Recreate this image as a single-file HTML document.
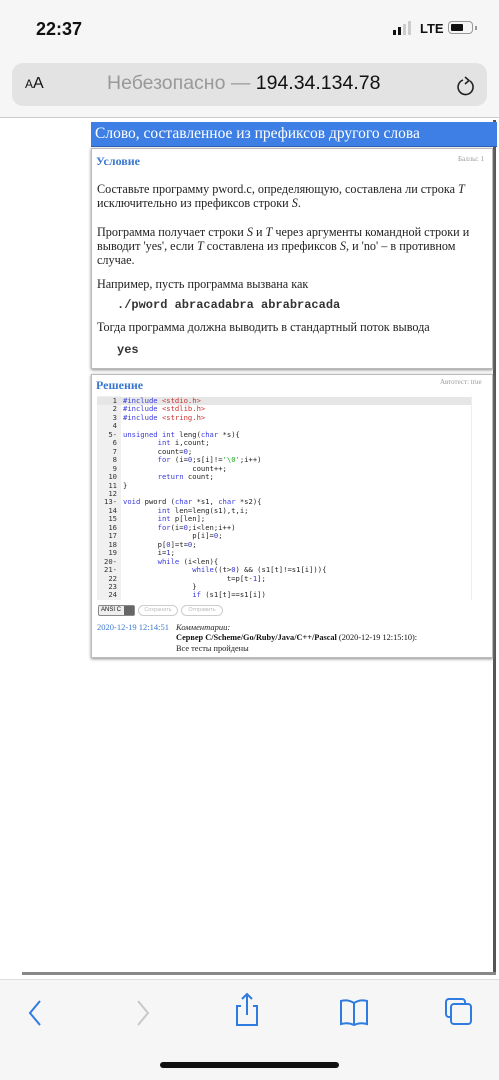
<!DOCTYPE html>
<html><head><meta charset="utf-8"><style>
*{margin:0;padding:0;box-sizing:border-box}
body{width:499px;height:1080px;background:#fff;position:relative;overflow:hidden;font-family:"Liberation Serif",serif;color:#222}
.a{position:absolute}
.sans{font-family:"Liberation Sans",sans-serif}
.code{font-family:"DejaVu Sans Mono","Liberation Mono",monospace;font-size:7.2px;line-height:8.45px;white-space:pre;color:#222}
.k{color:#3a3adf}.s{color:#c33}.n{color:#33c}.g{color:#2a2}
p.t{position:absolute;left:97px;font-size:12.2px;line-height:14px;width:392px}
</style></head><body>
<div class="a" style="left:0;top:0;width:499px;height:118px;background:#f6f6f6"></div>
<div class="a sans" style="left:36px;top:19px;font-size:18px;font-weight:bold;color:#111">22:37</div>
<div class="a" style="left:393px;top:30px;width:3px;height:5px;background:#111"></div>
<div class="a" style="left:398px;top:27px;width:3px;height:8px;background:#111"></div>
<div class="a" style="left:403px;top:24px;width:3px;height:11px;background:#ccc"></div>
<div class="a" style="left:408px;top:21px;width:3px;height:14px;background:#ccc"></div>
<div class="a sans" style="left:420px;top:21px;font-size:13px;font-weight:bold;color:#111">LTE</div>
<div class="a" style="left:448px;top:21px;width:25px;height:13px;border:1.5px solid #999;border-radius:4px"></div>
<div class="a" style="left:451px;top:24px;width:12px;height:7px;background:#111;border-radius:1px"></div>
<div class="a" style="left:475px;top:26px;width:2px;height:4px;background:#999"></div>
<div class="a" style="left:12px;top:63px;width:475px;height:43px;background:#e3e3e3;border-radius:11px"></div>
<div class="a sans" style="left:25px;top:75px;font-size:16px;color:#111"><span style="font-size:12px">A</span>A</div>
<div class="a sans" style="left:107px;top:72px;font-size:19.5px;color:#999">Небезопасно — <span style="color:#111">194.34.134.78</span></div>
<svg class="a" style="left:455px;top:74px" width="22" height="24" viewBox="0 0 22 24"><path d="M15 7 A7.5 7.5 0 1 1 8 6" fill="none" stroke="#222" stroke-width="1.6"/><path d="M10 3 L14 6.5 L10 10" fill="none" stroke="#222" stroke-width="1.6"/></svg>
<div class="a" style="left:0;top:117px;width:499px;height:1px;background:#ccc"></div>

<div class="a" style="left:493px;top:120px;width:3px;height:852px;background:#555"></div>
<div class="a" style="left:22px;top:972px;width:474px;height:3px;background:#888"></div>

<div class="a" style="left:91px;top:122px;width:406px;height:25px;background:#3d7fe4;border-bottom:1px solid #2b5fb8"></div>
<div class="a" style="left:95px;top:125px;font-size:15.5px;color:#fff">Слово, составленное из префиксов другого слова</div>

<div class="a" style="left:91px;top:148px;width:402px;height:221px;border:1px solid #bbb;box-shadow:0 1px 3px #888"></div>
<div class="a" style="left:96px;top:154px;font-size:12px;font-weight:bold;color:#3b78d0">Условие</div>
<div class="a" style="left:458px;top:155px;font-size:7px;color:#999">Баллы: 1</div>
<p class="t" style="top:182px">Составьте программу pword.c, определяющую, составлена ли строка <i>T</i> исключительно из префиксов строки <i>S</i>.</p>
<p class="t" style="top:225px">Программа получает строки <i>S</i> и <i>T</i> через аргументы командной строки и выводит 'yes', если <i>T</i> составлена из префиксов <i>S</i>, и 'no' – в противном случае.</p>
<p class="t" style="top:277px">Например, пусть программа вызвана как</p>
<div class="a" style="left:117px;top:298px;font-family:'Liberation Mono',monospace;font-size:12px;font-weight:bold;color:#333">./pword abracadabra abrabracada</div>
<p class="t" style="top:320px">Тогда программа должна выводить в стандартный поток вывода</p>
<div class="a" style="left:117px;top:343px;font-family:'Liberation Mono',monospace;font-size:12px;font-weight:bold;color:#333">yes</div>

<div class="a" style="left:91px;top:374px;width:402px;height:284px;border:1px solid #bbb;box-shadow:0 1px 3px #888"></div>
<div class="a" style="left:96px;top:378px;font-size:12px;font-weight:bold;color:#3b78d0">Решение</div>
<div class="a" style="left:440px;top:378px;font-size:7px;color:#999">Автотест: true</div>
<div class="a" style="left:97px;top:396px;width:375px;height:204px;background:#fff;border-right:1px solid #eee;overflow:hidden">
<div class="a" style="left:0;top:0;width:24px;height:204px;background:#f0f0f0"></div>
<div class="a" style="left:0;top:1px;width:375px;height:8px;background:#e6e6e6"></div>
<div class="a code" style="left:0;top:1px;width:20px;text-align:right;color:#333">1
2
3
4
5-
6
7
8
9
10
11
12
13-
14
15
16
17
18
19
20-
21-
22
23
24</div>
<div class="a code" style="left:26px;top:1px"><span class="k">#include</span> <span class="s">&lt;stdio.h&gt;</span>
<span class="k">#include</span> <span class="s">&lt;stdlib.h&gt;</span>
<span class="k">#include</span> <span class="s">&lt;string.h&gt;</span>

<span class="k">unsigned int</span> leng(<span class="k">char</span> *s){
        <span class="k">int</span> i,count;
        count=<span class="n">0</span>;
        <span class="k">for</span> (i=<span class="n">0</span>;s[i]!=<span class="g">'\0'</span>;i++)
                count++;
        <span class="k">return</span> count;
}

<span class="k">void</span> pword (<span class="k">char</span> *s1, <span class="k">char</span> *s2){
        <span class="k">int</span> len=leng(s1),t,i;
        <span class="k">int</span> p[len];
        <span class="k">for</span>(i=<span class="n">0</span>;i&lt;len;i++)
                p[i]=<span class="n">0</span>;
        p[<span class="n">0</span>]=t=<span class="n">0</span>;
        i=<span class="n">1</span>;
        <span class="k">while</span> (i&lt;len){
                <span class="k">while</span>((t&gt;<span class="n">0</span>) &amp;&amp; (s1[t]!=s1[i])){
                        t=p[t-<span class="n">1</span>];
                }
                <span class="k">if</span> (s1[t]==s1[i])</div>
</div>
<div class="a sans" style="left:98px;top:605px;width:37px;height:11px;border:1px solid #888;border-radius:2px;background:#eee;font-size:6px;line-height:9px;padding-left:2px;color:#111">ANSI C<span style="position:absolute;right:0;top:0;width:10px;height:9px;background:#666"></span></div>
<div class="a sans" style="left:138px;top:605px;width:40px;height:11px;border:1px solid #ccc;border-radius:6px;font-size:5.5px;line-height:9px;text-align:center;color:#bbb">Сохранить</div>
<div class="a sans" style="left:181px;top:605px;width:42px;height:11px;border:1px solid #ccc;border-radius:6px;font-size:5.5px;line-height:9px;text-align:center;color:#bbb">Отправить</div>
<div class="a" style="left:97px;top:622px;font-size:8.5px;color:#3b78d0">2020-12-19 12:14:51</div>
<div class="a" style="left:176px;top:622px;font-size:8.5px;font-style:italic;color:#222">Комментарии:</div>
<div class="a" style="left:176px;top:633px;font-size:8.3px;color:#111"><b>Сервер C/Scheme/Go/Ruby/Java/C++/Pascal</b> (2020-12-19 12:15:10):</div>
<div class="a" style="left:176px;top:644px;font-size:8.3px;color:#222">Все тесты пройдены</div>

<div class="a" style="left:0;top:979px;width:499px;height:101px;background:#f6f6f6;border-top:1px solid #ddd"></div>
<svg class="a" style="left:0;top:990px" width="499" height="40" viewBox="0 0 499 40">
<path d="M40 11 L30 23 L40 35" fill="none" stroke="#2f7be0" stroke-width="2"/>
<path d="M138 11 L148 23 L138 35" fill="none" stroke="#c8c8c8" stroke-width="2"/>
<path d="M241 16 H237 V35 H257 V16 H253 M247 4 V25 M242 9 L247 4 L252 9" fill="none" stroke="#2f7be0" stroke-width="2"/>
<path d="M341 11 Q348 9 354 13 Q360 9 367 11 V34 Q360 32 354 35 Q348 32 341 34 Z M354 13 V35" fill="none" stroke="#2f7be0" stroke-width="2"/>
<rect x="446" y="9" width="19" height="18" rx="3" fill="none" stroke="#2f7be0" stroke-width="2"/>
<rect x="451" y="14" width="20" height="20" rx="3" fill="#f6f6f6" stroke="#2f7be0" stroke-width="2"/>
</svg>
<div class="a" style="left:160px;top:1062px;width:179px;height:6px;border-radius:3px;background:#111"></div>
</body></html>
